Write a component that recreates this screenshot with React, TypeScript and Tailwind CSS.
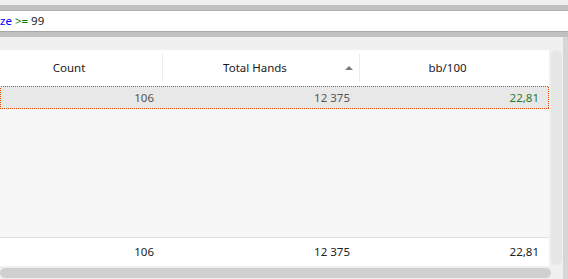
import React from "react";

const font = { fontFamily: '"Noto Sans", "Open Sans", sans-serif' };

export default function App() {
  return (
    <div className="w-[568px] h-[279px] bg-[#f0f0f0] overflow-hidden flex flex-col text-[11.5px]" style={font}>
      <div className="h-[5px] shrink-0 bg-[#f0f0f0]" />
      <div className="h-[5px] shrink-0 bg-[#c0c0c0]" />
      <div className="h-[1px] shrink-0 bg-[#b0b0b0]" />
      <div className="h-[20px] shrink-0 bg-white flex items-center leading-none">
        <span className="text-[#0000ff]">ze</span>
        <span className="text-[#008000] ml-[3px]">&gt;=</span>
        <span className="text-[#1a1a1a] ml-[3px]">99</span>
      </div>
      <div className="h-[1px] shrink-0 bg-[#a8a8a8]" />
      <div className="h-[5px] shrink-0 bg-[#c0c0c0]" />
      <div className="flex flex-1 min-h-0">
        <div className="w-[551px] flex flex-col">
          <div className="h-[13px] shrink-0" />
          <div className="w-[549px] flex flex-col flex-1 min-h-0">
            {/* header */}
            <div className="h-[36px] shrink-0 bg-white flex text-[#1a1a1a]">
              <div className="w-[163px] flex items-center justify-center pr-[24px] border-r border-[#ececec] my-[4px]">Count</div>
              <div className="w-[197px] flex items-center relative border-r border-[#ececec] my-[4px]">
                <span className="flex-1 text-center pr-[12px]">Total Hands</span>
                <svg className="absolute left-[182px] top-[12px]" width="8" height="4" viewBox="0 0 8 4">
                  <polygon points="0,4 8,4 4,0" fill="#7a7a7a" />
                </svg>
              </div>
              <div className="flex-1 flex items-center justify-center pr-[14px] my-[4px]">bb/100</div>
            </div>
            {/* selected row */}
            <div className="relative h-[23px] shrink-0 bg-[#e8e8e8] flex items-center text-[#555]">
              <svg className="absolute left-0 top-0 pointer-events-none" width="549" height="23" viewBox="0 0 549 23" shapeRendering="crispEdges">
                <rect x="0.5" y="0.5" width="548" height="22" fill="none" stroke="#e04a00" strokeWidth="1" strokeDasharray="1 1" />
              </svg>
              <div className="w-[163px] text-right pr-[9px]">106</div>
              <div className="w-[197px] text-right pr-[10px]">12 375</div>
              <div className="flex-1 text-right pr-[10px] text-[#2a7a2a]">22,81</div>
            </div>
            <div className="flex-1 bg-[#f7f7f7]" />
            <div className="h-[1px] shrink-0 bg-[#e0e0e0]" />
            {/* footer */}
            <div className="h-[28px] shrink-0 bg-white flex items-center text-[#222]">
              <div className="w-[163px] text-right pr-[9px]">106</div>
              <div className="w-[197px] text-right pr-[10px]">12 375</div>
              <div className="flex-1 text-right pr-[10px]">22,81</div>
            </div>
          </div>
          <div className="h-[2px] shrink-0" />
          <div className="h-[10px] shrink-0 rounded-full bg-[#d0d0d0]" />
          <div className="h-[1px] shrink-0" />
        </div>
        <div className="w-[12px] flex flex-col">
          <div className="h-[13px] shrink-0" />
          <div className="h-[215px] bg-[#e6e6e6] rounded-[6px] w-[11px]" />
        </div>
        <div className="flex-1 bg-[#d6d6d6]" />
      </div>
    </div>
  );
}
